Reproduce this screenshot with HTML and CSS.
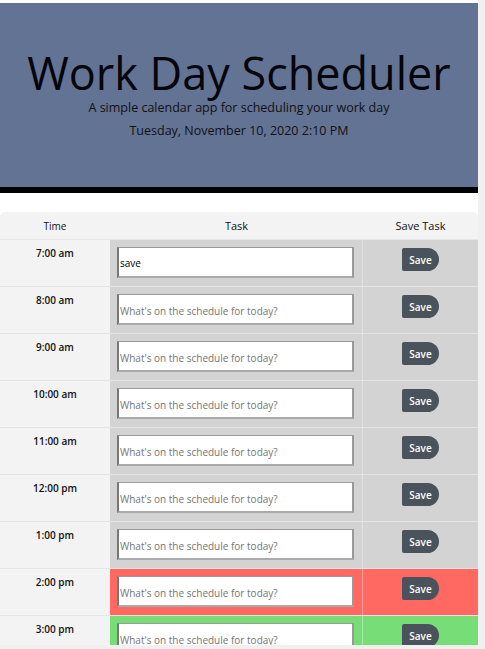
FILE: index.html
```html
<!DOCTYPE html>
<html>
<head>
<meta charset="utf-8">
<link rel="stylesheet" href="styles.css">
</head>
<body>
<div class="page">
  <header class="jumbo">
    <h1 class="title">Work Day Scheduler</h1>
    <p class="lead">A simple calendar app for scheduling your work day</p>
    <p class="date">Tuesday, November 10, 2020 2:10 PM</p>
  </header>
  <div class="table">
    <div class="row head">
      <div class="c-time">Time</div>
      <div class="c-task">Task</div>
      <div class="c-save">Save Task</div>
    </div>
    <div class="row past">
      <div class="c-time">7:00 am</div>
      <div class="c-task"><div class="ta filled">save</div></div>
      <div class="c-save"><button class="btn">Save</button></div>
    </div>
    <div class="row past">
      <div class="c-time">8:00 am</div>
      <div class="c-task"><div class="ta">What's on the schedule for today?</div></div>
      <div class="c-save"><button class="btn">Save</button></div>
    </div>
    <div class="row past">
      <div class="c-time">9:00 am</div>
      <div class="c-task"><div class="ta">What's on the schedule for today?</div></div>
      <div class="c-save"><button class="btn">Save</button></div>
    </div>
    <div class="row past">
      <div class="c-time">10:00 am</div>
      <div class="c-task"><div class="ta">What's on the schedule for today?</div></div>
      <div class="c-save"><button class="btn">Save</button></div>
    </div>
    <div class="row past">
      <div class="c-time">11:00 am</div>
      <div class="c-task"><div class="ta">What's on the schedule for today?</div></div>
      <div class="c-save"><button class="btn">Save</button></div>
    </div>
    <div class="row past">
      <div class="c-time">12:00 pm</div>
      <div class="c-task"><div class="ta">What's on the schedule for today?</div></div>
      <div class="c-save"><button class="btn">Save</button></div>
    </div>
    <div class="row past">
      <div class="c-time">1:00 pm</div>
      <div class="c-task"><div class="ta">What's on the schedule for today?</div></div>
      <div class="c-save"><button class="btn">Save</button></div>
    </div>
    <div class="row present">
      <div class="c-time">2:00 pm</div>
      <div class="c-task"><div class="ta">What's on the schedule for today?</div></div>
      <div class="c-save"><button class="btn">Save</button></div>
    </div>
    <div class="row future">
      <div class="c-time">3:00 pm</div>
      <div class="c-task"><div class="ta">What's on the schedule for today?</div></div>
      <div class="c-save"><button class="btn">Save</button></div>
    </div>
  </div>
</div>
</body>
</html>
```
FILE: styles.css
```css
html, body {
  margin: 0;
  padding: 0;
  height: 649px;
  overflow: hidden;
  background: #f0f0f0;
}
body {
  font-family: "Open Sans", "Noto Sans", sans-serif;
  color: #111;
}
.page {
  width: 478px;
  height: 645px;
  overflow: hidden;
  background: #fff;
  padding-top: 3px;
  box-sizing: border-box;
}
.jumbo {
  background: #637394;
  border-bottom: 6px solid #000;
  text-align: center;
  padding-top: 43px;
  box-sizing: content-box;
  height: 141px;
}
.title {
  margin: 0;
  font-size: 45px;
  font-weight: 400;
  line-height: 53px;
  color: #05050c;
}
.lead {
  margin: 0;
  font-size: 12.5px;
  line-height: 18px;
}
.date {
  margin: 5px 0 0;
  font-size: 12.5px;
  line-height: 18px;
}
.table {
  margin-top: 19px;
}
.row {
  display: flex;
  height: 47px;
  border-bottom: 1px solid #e4e4e4;
  box-sizing: border-box;
}
.row.head {
  height: 28px;
  background: #f3f3f3;
  border-radius: 5px 5px 0 0;
  border-bottom: 1px solid #e6e6e6;
  font-size: 11px;
  align-items: center;
}
.row.head > div {
  text-align: center;
  background: transparent;
  padding: 0;
  border: 0;
  font-weight: 400;
}
.c-time {
  width: 110px;
  flex: none;
  background: #f3f3f3;
  text-align: center;
  font-size: 10px;
  font-weight: 600;
  padding-top: 5px;
  box-sizing: border-box;
  line-height: 16px;
}
.c-task {
  width: 253px;
  flex: none;
  padding: 7px 8px 0 7px;
  box-sizing: border-box;
  border-right: 1px solid #e4e4e4;
}
.c-save {
  flex: 1;
  display: flex;
  justify-content: center;
  align-items: flex-start;
  padding-top: 8px;
}
.past .c-task, .past .c-save { background: #d3d3d3; }
.present .c-task, .present .c-save { background: #ff6961; }
.future .c-task, .future .c-save { background: #77dd77; }
.past .c-task { border-right-color: #e2e2e2; }
.present .c-task { border-right-color: #f5a09a; }
.future .c-task { border-right-color: #a8e8a8; }
.ta {
  height: 31px;
  background: #fff;
  box-sizing: border-box;
  border-top: 1px solid #9a9a9a;
  border-left: 2px solid #777;
  border-right: 2px solid #999;
  border-bottom: 2px solid #aaa;
  font-size: 10px;
  color: #757575;
  padding: 9px 0 0 1px;
  line-height: 14px;
  white-space: nowrap;
  overflow: hidden;
}
.ta.filled { color: #000; padding-top: 8px; }
.btn {
  width: 37px;
  height: 23px;
  border: 0;
  background: #4a525c;
  color: #fff;
  font-family: "Open Sans", sans-serif;
  font-weight: 600;
  font-size: 10px;
  border-radius: 2px 12px 12px 2px;
  padding: 0;
}
```
